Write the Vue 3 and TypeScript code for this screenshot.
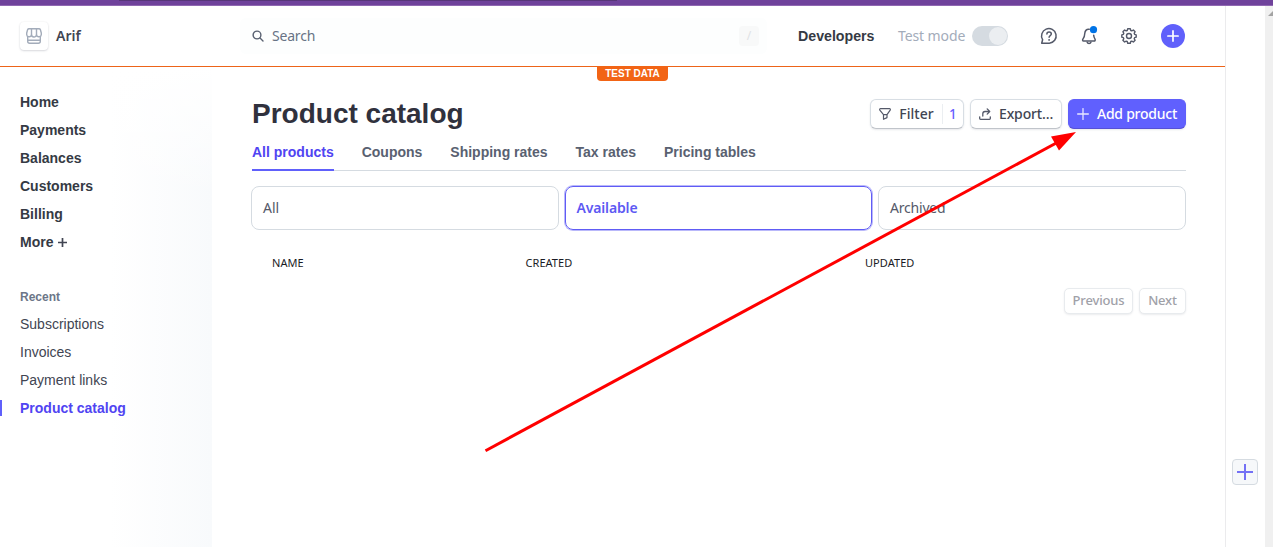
<script setup lang="ts">
interface NavItem { label: string; active?: boolean }

const mainNav: string[] = ['Home', 'Payments', 'Balances', 'Customers', 'Billing']
const recent: NavItem[] = [
  { label: 'Subscriptions' },
  { label: 'Invoices' },
  { label: 'Payment links' },
  { label: 'Product catalog', active: true },
]
const tabs: NavItem[] = [
  { label: 'All products', active: true },
  { label: 'Coupons' },
  { label: 'Shipping rates' },
  { label: 'Tax rates' },
  { label: 'Pricing tables' },
]
const statuses: NavItem[] = [
  { label: 'All' },
  { label: 'Available', active: true },
  { label: 'Archived' },
]
const columns: string[] = ['Name', 'Created', 'Updated']
</script>

<template>
  <div class="screen">
    <div class="window-strip"><div class="strip-shade"></div></div>
    <div class="body">
      <div class="app">
        <header class="topbar">
          <div class="account">
            <div class="logo">
              <svg width="16" height="16" viewBox="0 0 16 16" fill="none" stroke="#a3acba" stroke-width="1.4" stroke-linejoin="round">
                <path d="M3 .7h10a1.500 1.500 0 0 1 1.400 1L15.300 5v1.200a2.400 2.400 0 0 1-4.800.3 2.500 2.500 0 0 1-5 0A2.400 2.400 0 0 1 .7 6.200V5l.9-3.300A1.500 1.500 0 0 1 3 .7z" />
                <path d="M5.500.8v5.700M10.500.8v5.700M1.700 8.600v4.700a2 2 0 0 0 2 2h8.600a2 2 0 0 0 2-2V8.600M1.700 12.200h12.600" />
              </svg>
            </div>
            <span class="account-name">Arif</span>
          </div>
          <div class="search">
            <svg class="search-icon" width="12" height="12" viewBox="0 0 12 12" fill="none" stroke="#596171" stroke-width="1.4" stroke-linecap="round">
              <circle cx="5" cy="5" r="3.900" /><path d="M8 8l3 3" />
            </svg>
            <span class="search-text">Search</span>
            <span class="slash">/</span>
          </div>
          <div class="tools">
            <span class="developers">Developers</span>
            <span class="test-label">Test mode</span>
            <span class="toggle"><span class="knob"></span></span>
            <svg class="help" width="18" height="18" viewBox="0 0 18 18" fill="none" stroke="#545969" stroke-width="1.5" stroke-linecap="round" stroke-linejoin="round">
              <path d="M1.700 16.200l.9-3.500A7.300 7.300 0 1 1 9.300 16.200z" />
              <path d="M6.900 7.100c0-1.300 1-2 2.200-2s2.200.8 2.200 1.900c0 1.500-2.200 1.600-2.200 3.300" />
              <path d="M9.100 12.800v.1" stroke-width="1.800" />
            </svg>
            <svg class="bell" width="18" height="20" viewBox="0 0 18 20">
              <g fill="none" stroke="#545969" stroke-width="1.500" stroke-linecap="round" stroke-linejoin="round">
                <path d="M9.200 3.300C6.700 2.700 5 4.700 4.800 7.300c-.2 3-.6 4.300-1.700 5.500-.8.9-.6 2.300.5 2.300h10.300c1.300 0 1.600-1.200 1-2.200-.8-1.100-1.100-2-1.200-3.600" />
                <path d="M7.200 16.300c.4 1.500 3.300 1.500 3.700 0" />
              </g>
              <circle cx="13.500" cy="3.700" r="3.600" fill="#0073e6" />
            </svg>
            <svg class="gear" width="16" height="16" viewBox="0 0 16 16" fill="none" stroke="#545969" stroke-linejoin="round">
              <path stroke-width="1.400" d="M6.700.8h2.600l.5 1.700 1 .4 1.600-.9 1.700 1.700-.9 1.600.4 1 1.600.5v2.400l-1.600.5-.4 1 .9 1.600-1.700 1.700-1.600-.9-1 .4-.5 1.700H6.700l-.5-1.700-1-.4-1.600.9-1.700-1.700.9-1.600-.4-1L.8 9.200V6.800l1.600-.5.4-1-.9-1.600L3.600 2l1.600.9 1-.4z" />
              <circle cx="8" cy="8" r="2.500" stroke-width="1.400" />
            </svg>
            <span class="create">
              <svg width="12" height="12" viewBox="0 0 12 12" stroke="#fff" stroke-width="1.700" stroke-linecap="round"><path d="M6 .9v10.200M.9 6h10.200" /></svg>
            </span>
          </div>
          <div class="test-badge">TEST DATA</div>
        </header>

        <div class="columns">
          <nav class="sidebar">
            <a v-for="item in mainNav" :key="item" class="nav-main">{{ item }}</a>
            <a class="nav-main">More
              <svg class="more-plus" width="9" height="9" viewBox="0 0 9 9" stroke="#414552" stroke-width="1.700"><path d="M4.500 0v9M0 4.500h9" /></svg>
            </a>
            <div class="recent-title">Recent</div>
            <a v-for="item in recent" :key="item.label" class="nav-sub" :class="{ active: item.active }">{{ item.label }}</a>
          </nav>

          <main class="content">
            <div class="title-row">
              <h1>Product catalog</h1>
              <div class="actions">
                <button class="btn filter">
                  <svg width="12" height="12" viewBox="0 0 12 12" fill="none" stroke="#545969" stroke-width="1.200" stroke-linejoin="round">
                    <path d="M1.500.7h9c.8 0 1 .8.700 1.400L8 6.700v2.900l-3.500 1.700V6.700L.8 2.100C.5 1.500.7.700 1.500.7zM4.500 6.700H8" />
                  </svg>
                  <span class="filter-label">Filter</span><span class="count">1</span>
                </button>
                <button class="btn export">
                  <svg width="12" height="12" viewBox="0 0 12 12" fill="none" stroke="#545969" stroke-width="1.300" stroke-linecap="round" stroke-linejoin="round">
                    <path d="M.7 8.800v1.700c0 .5.3.8.8.8h9c.5 0 .8-.3.800-.8V8.800M3.800 8V5.800c0-1.300.8-2.300 2.200-2.300h4.400M8.200.9l2.500 2.600-2.500 2.600" />
                  </svg>
                  <span>Export…</span>
                </button>
                <button class="btn add">
                  <svg width="12" height="12" viewBox="0 0 12 12" stroke="#e6e6ff" stroke-width="1.300" stroke-linecap="round"><path d="M6 .6v10.800M.6 6h10.800" /></svg>
                  <span>Add product</span>
                </button>
              </div>
            </div>
            <div class="tabs">
              <a v-for="tab in tabs" :key="tab.label" class="tab" :class="{ active: tab.active }">{{ tab.label }}</a>
            </div>
            <div class="statuses">
              <div v-for="s in statuses" :key="s.label" class="status" :class="{ active: s.active }"><span>{{ s.label }}</span></div>
            </div>
            <div class="table-head">
              <span v-for="c in columns" :key="c">{{ c }}</span>
            </div>
            <div class="pager">
              <button class="page previous">Previous</button>
              <button class="page next">Next</button>
            </div>
          </main>
        </div>
      </div>
      <aside class="rail">
        <button class="rail-add">
          <svg width="16" height="16" viewBox="0 0 16 16" stroke="#7471f5" stroke-width="2"><path d="M8 0v16M0 8h16" /></svg>
        </button>
      </aside>
      <div class="scrollbar"><svg width="8" height="5" viewBox="0 0 8 5"><path d="M3 5L8 0v5z" fill="#a3a3a3" /></svg></div>
    </div>
    <svg class="pointer" width="1273" height="547" viewBox="0 0 1273 547">
      <path d="M485.500 450.700L1060 141" stroke="#f00" stroke-width="3" fill="none" />
      <path d="M1076 132L1051 136.500L1059 150.500z" fill="#f00" />
    </svg>
  </div>
</template>

<style>
body { margin: 0; overflow: hidden; background: #fff; }
</style>

<style scoped>
* { box-sizing: border-box; }
.screen {
  position: relative; width: 1273px; height: 547px; overflow: hidden;
  display: flex; flex-direction: column;
  font-family: "Noto Sans", sans-serif; font-size: 14px; color: #414552;
}
.window-strip { height: 6px; flex: none; background: #6f429b; border-bottom: 1px solid #9068b1; }
.strip-shade { height: 1px; width: 498px; margin-left: 119px; background: #573679; }
.body { display: flex; flex: 1; min-height: 0; }
.app { width: 1226px; border-right: 1px solid #ebebed; display: flex; flex-direction: column; }

.topbar { position: relative; height: 61px; flex: none; display: flex; align-items: center; border-bottom: 1px solid #ed6419; }
.account { width: 240px; padding-left: 20px; display: flex; align-items: center; }
.logo {
  width: 28px; height: 28px; display: grid; place-items: center; border-radius: 4px; background: #fff;
  box-shadow: 0 0 2px rgba(60, 66, 87, .08), 0 1px 2px rgba(60, 66, 87, .18);
}
.account-name { margin-left: 8px; padding-bottom: 2px; font-weight: 600; }
.search { width: 527px; height: 36px; padding-left: 12px; display: flex; align-items: center; background: #fdfefe; border-radius: 6px; }
.search-text { margin-left: 8px; padding-bottom: 2px; color: #687385; letter-spacing: -.2px; }
.slash { margin-left: auto; margin-right: 8px; width: 20px; height: 20px; border-radius: 4px; background: #f8f9f9; color: #dfe2e5; font-size: 12px; line-height: 20px; text-align: center; }
.tools { flex: 1; display: flex; align-items: center; }
.developers { width: 100px; margin-left: 31px; font: bold 14.200px "Liberation Sans", sans-serif; color: #353a44; }
.test-label { width: 74px; padding-bottom: 2px; color: #a3acba; letter-spacing: -.1px; }
.toggle { width: 36px; height: 20px; padding: 1px; display: flex; justify-content: flex-end; border-radius: 10px; background: #d5dbe1; }
.knob { width: 18px; height: 18px; border-radius: 50%; background: #ebeef1; }
.help { margin-left: 32px; }
.bell { margin-left: 22px; margin-top: -1px; }
.gear { margin-left: 23px; }
.create { margin-left: 24px; width: 24px; height: 24px; display: grid; place-items: center; border-radius: 50%; background: #6060fb; }
.test-badge {
  position: absolute; left: 597px; top: 60px; width: 71px; height: 15px; border-radius: 0 0 4px 4px;
  background: #f26415; color: #fff; text-align: center; font: bold 10px/16px "Liberation Sans", sans-serif;
}

.columns { flex: 1; display: flex; min-height: 0; }
.sidebar {
  width: 212px; padding-top: 21px; display: flex; flex-direction: column;
  font-family: "Liberation Sans", sans-serif;
  background: linear-gradient(to bottom, #fff, rgba(255, 255, 255, 0) 130px), linear-gradient(to right, #fff 110px, #f8fafc);
}
.nav-main, .nav-sub { height: 28px; line-height: 28px; padding-left: 20px; }
.nav-main { font-weight: bold; font-size: 14px; color: #353a44; }
.more-plus { margin-left: 1px; }
.recent-title { margin-top: 32px; height: 22px; line-height: 18px; padding-left: 20px; font-weight: bold; font-size: 12px; color: #6c7688; }
.nav-sub { display: flex; align-items: center; font-size: 14px; }
.nav-sub.active { color: #5044f2; font-weight: bold; }
.nav-sub.active::before { content: ""; width: 2px; height: 16px; margin-left: -20px; margin-right: 18px; background: #6060fb; }

.content { width: 974px; padding: 32px 0 0 40px; }
.title-row { height: 30px; display: flex; align-items: center; justify-content: space-between; }
h1 { margin: 0; font: bold 28px/30px "Liberation Sans", sans-serif; color: #30313d; }
.actions { display: flex; gap: 6px; }
.btn {
  height: 30px; padding: 0 0 1px 8px; display: flex; align-items: center; border: 1px solid #d8dee4; border-bottom-color: #c0c4ca; border-radius: 6px;
  background: #fff; font: 500 14px "Noto Sans", sans-serif; color: #414552; white-space: nowrap; box-shadow: 0 1px 2px rgba(60, 66, 87, .12);
}
.btn svg { flex: none; margin-right: 8px; }
.filter { width: 94px; }
.count { height: 20px; line-height: 20px; margin-left: 8px; padding-left: 6px; border-left: 1px solid #ebeef1; color: #675dff; font-size: 13.500px; }
.filter-label { width: 35px; }
.export { width: 92px; letter-spacing: -.15px; }
.add { width: 118px; background: #6060fe; border-color: #605ffa; border-bottom-color: #5650d5; color: #fff; letter-spacing: -.25px; }

.tabs { display: flex; gap: 28px; height: 42px; border-bottom: 1px solid #d5dbe1; }
.tab { height: 42px; padding-top: 15px; font: bold 14px/16px "Liberation Sans", sans-serif; color: #596171; white-space: nowrap; }
.tab.active { color: #5044f2; border-bottom: 2px solid #6060fb; }

.statuses { display: grid; grid-template-columns: repeat(3, 308px); gap: 5.500px; margin: 15px 0 0 -1px; }
.status { height: 44px; padding: 0 0 2px 11px; display: flex; align-items: center; border: 1px solid #d5dbe1; border-radius: 8px; color: #545969; }
.status.active { border-color: #605cf5; box-shadow: 0 0 0 1px #b9b8fa; color: #5d59f3; font-weight: 600; letter-spacing: -.15px; width: 307px; }
.status:last-child { letter-spacing: -.2px; }

.table-head { display: grid; grid-template-columns: 253.500px 339.500px 1fr; margin-top: 24px; padding-left: 20px; height: 18px; line-height: 18px; font-size: 11px; text-transform: uppercase; color: #1a1b25; letter-spacing: .05px; }
.pager { display: flex; justify-content: flex-end; gap: 6px; margin-top: 16px; }
.page {
  height: 26px; padding: 0 0 2px; border: 1px solid #e8ebee; border-radius: 5px; background: #fff; color: #a0a1a8;
  font: 500 13px "Noto Sans", sans-serif; letter-spacing: -.15px; box-shadow: 0 1px 2px rgba(60, 66, 87, .1);
}
.previous { width: 69px; }
.next { width: 47px; }

.rail { width: 39px; padding-left: 6px; padding-top: 453px; }
.rail-add { width: 26px; height: 26px; padding: 0; display: grid; place-items: center; border: 1px solid #d5dbe1; border-radius: 4px; background: #f6f8fa; }
.scrollbar { width: 8px; padding-top: 5px; background: #f0f0f0; line-height: 0; }
.pointer { position: absolute; left: 0; top: 0; pointer-events: none; }
</style>
